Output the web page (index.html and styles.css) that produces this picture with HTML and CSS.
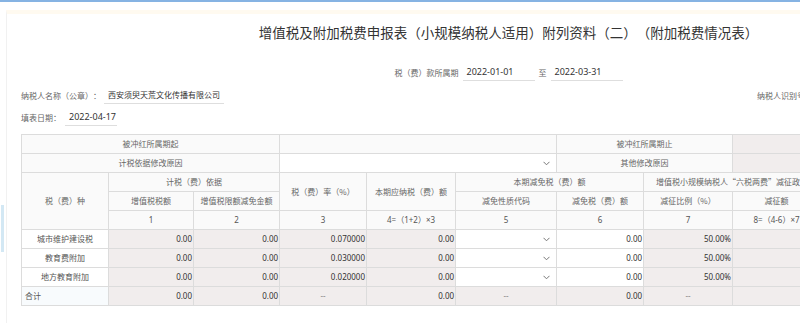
FILE: index.html
```html
<!DOCTYPE html>
<html lang="zh-CN">
<head>
<meta charset="utf-8">
<title>附加税费情况表</title>
<link rel="stylesheet" href="styles.css">
</head>
<body>
<div class="topbar"></div>
<div class="side-tab"></div>
<div class="page">
  <h1 class="title">增值税及附加税费申报表（小规模纳税人适用）附列资料（二）（附加税费情况表）</h1>
  <div class="period">
    <span class="label">税（费）款所属期</span>
    <span class="field w72">2022-01-01</span>
    <span class="label to">至</span>
    <span class="field w72">2022-03-31</span>
  </div>
  <div class="info-row">
    <div class="group">
      <span class="label">纳税人名称（公章）：</span>
      <span class="field w120 name">西安须臾天荒文化传播有限公司</span>
    </div>
    <div class="group right">
      <span class="label">纳税人识别号：</span>
      <span class="field w140"></span>
    </div>
  </div>
  <div class="date-row">
    <span class="label">填表日期：</span>
    <span class="field w52">2022-04-17</span>
  </div>
  <table class="grid">
    <colgroup>
      <col class="c87"><col class="c85"><col class="c86"><col class="c87"><col class="c89"><col class="c101"><col class="c87"><col class="c89"><col class="c88"><col class="c88"><col class="c88">
    </colgroup>
    <tr>
      <td colspan="3" class="hd">被冲红所属期起</td>
      <td colspan="3" class="hd"></td>
      <td colspan="2" class="hd">被冲红所属期止</td>
      <td colspan="3" class="ro"></td>
    </tr>
    <tr>
      <td colspan="3" class="hd">计税依据修改原因</td>
      <td colspan="3" class="sel"><span class="chev"><svg width="7" height="5" viewBox="0 0 7 5"><polyline points="0.5,0.8 3.5,3.8 6.5,0.8" fill="none" stroke="#777" stroke-width="1"/></svg></span></td>
      <td colspan="2" class="hd">其他修改原因</td>
      <td colspan="3" class="ro"></td>
    </tr>
    <tr>
      <td rowspan="3" class="hd">税（费）种</td>
      <td colspan="2" class="hd">计税（费）依据</td>
      <td rowspan="2" class="hd">税（费）率（%）</td>
      <td rowspan="2" class="hd">本期应纳税（费）额</td>
      <td colspan="2" class="hd">本期减免税（费）额</td>
      <td colspan="2" class="hd">增值税小规模纳税人“六税两费”减征政策</td>
      <td rowspan="2" class="hd">本期已缴税（费）额</td>
      <td rowspan="2" class="hd">本期应补（退）税（费）额</td>
    </tr>
    <tr>
      <td class="hd">增值税税额</td>
      <td class="hd">增值税限额减免金额</td>
      <td class="hd">减免性质代码</td>
      <td class="hd">减免税（费）额</td>
      <td class="hd">减征比例（%）</td>
      <td class="hd">减征额</td>
    </tr>
    <tr class="nums">
      <td class="hd">1</td>
      <td class="hd">2</td>
      <td class="hd">3</td>
      <td class="hd">4=（1+2）×3</td>
      <td class="hd">5</td>
      <td class="hd">6</td>
      <td class="hd">7</td>
      <td class="hd">8=（4-6）×7</td>
      <td class="hd">9</td>
      <td class="hd">10=4-6-8-9</td>
    </tr>
    <tr>
      <td class="nm">城市维护建设税</td>
      <td class="ro num">0.00</td>
      <td class="ro num">0.00</td>
      <td class="ro num">0.070000</td>
      <td class="ro num">0.00</td>
      <td class="sel"><span class="chev"><svg width="7" height="5" viewBox="0 0 7 5"><polyline points="0.5,0.8 3.5,3.8 6.5,0.8" fill="none" stroke="#777" stroke-width="1"/></svg></span></td>
      <td class="ed num">0.00</td>
      <td class="ro num">50.00%</td>
      <td class="ro num">0.00</td>
      <td class="ro num">0.00</td>
      <td class="ro num">0.00</td>
    </tr>
    <tr>
      <td class="nm">教育费附加</td>
      <td class="ro num">0.00</td>
      <td class="ro num">0.00</td>
      <td class="ro num">0.030000</td>
      <td class="ro num">0.00</td>
      <td class="sel"><span class="chev"><svg width="7" height="5" viewBox="0 0 7 5"><polyline points="0.5,0.8 3.5,3.8 6.5,0.8" fill="none" stroke="#777" stroke-width="1"/></svg></span></td>
      <td class="ed num">0.00</td>
      <td class="ro num">50.00%</td>
      <td class="ro num">0.00</td>
      <td class="ro num">0.00</td>
      <td class="ro num">0.00</td>
    </tr>
    <tr>
      <td class="nm">地方教育附加</td>
      <td class="ro num">0.00</td>
      <td class="ro num">0.00</td>
      <td class="ro num">0.020000</td>
      <td class="ro num">0.00</td>
      <td class="sel"><span class="chev"><svg width="7" height="5" viewBox="0 0 7 5"><polyline points="0.5,0.8 3.5,3.8 6.5,0.8" fill="none" stroke="#777" stroke-width="1"/></svg></span></td>
      <td class="ed num">0.00</td>
      <td class="ro num">50.00%</td>
      <td class="ro num">0.00</td>
      <td class="ro num">0.00</td>
      <td class="ro num">0.00</td>
    </tr>
    <tr>
      <td class="nm total">合计</td>
      <td class="ro num">0.00</td>
      <td class="ro num">0.00</td>
      <td class="ro dash">--</td>
      <td class="ro num">0.00</td>
      <td class="ro dash">--</td>
      <td class="ro num">0.00</td>
      <td class="ro dash">--</td>
      <td class="ro num">0.00</td>
      <td class="ro num">0.00</td>
      <td class="ro num">0.00</td>
    </tr>
  </table>
</div>
</body>
</html>
```
FILE: styles.css
```css
html, body {
  margin: 0;
  padding: 0;
  overflow: hidden;
  background: #fff;
}
body {
  font-family: "Noto Sans", "Noto Sans CJK SC", sans-serif;
  color: #333;
  position: relative;
  text-spacing-trim: space-all;
}
.topbar {
  height: 2px;
  background: #86b3e3;
}
.side-tab {
  position: absolute;
  left: 1px;
  top: 205px;
  width: 3px;
  height: 47px;
  background: #d3e8f4;
}
.page {
  width: 975px;
  margin-top: 8px;
  margin-left: 6px;
  border-top: 4px solid #fffaf0;
  border-left: 1px solid #f1f1f1;
  padding: 8px 0 0 14px;
  height: 400px;
}
.title {
  margin: 0;
  text-align: center;
  font-size: 13.5px;
  line-height: 20px;
  font-weight: normal;
  font-family: "Noto Sans CJK SC", sans-serif;
  color: #333;
}
.label {
  font-family: "Noto Sans CJK SC", sans-serif;
  font-size: 8px;
  color: #666;
}
.field {
  display: inline-block;
  box-sizing: border-box;
  height: 17px;
  line-height: 16px;
  padding: 0 4px;
  border-bottom: 1px solid #dedede;
  font-size: 9px;
  color: #333;
  white-space: nowrap;
}
.field.name {
  font-family: "Noto Sans CJK SC", sans-serif;
  font-size: 8px;
}
.w72 { width: 72px; }
.w120 { width: 120px; }
.w52 { width: 52px; }
.w140 { width: 140px; }
.period {
  margin-top: 20px;
  height: 20px;
  display: flex;
  justify-content: center;
  align-items: center;
  gap: 4px;
}
.info-row {
  margin-top: 3px;
  height: 20px;
  display: flex;
  justify-content: space-between;
  align-items: center;
}
.group {
  display: flex;
  align-items: center;
  gap: 3px;
}
.group.right {
  width: 239px;
}
.date-row {
  margin-top: 2px;
  height: 20px;
  display: flex;
  align-items: center;
  gap: 4px;
}
.grid {
  margin-top: 7px;
  border-collapse: collapse;
  table-layout: fixed;
  width: 975px;
}
.c87 { width: 87px; }
.c85 { width: 85px; }
.c86 { width: 86px; }
.c89 { width: 89px; }
.c101 { width: 101px; }
.c88 { width: 88px; }
.grid tr {
  height: 19px;
}
.grid td {
  border: 1px solid #dcdcdc;
  padding: 0 1px;
  font-size: 8px;
  line-height: 12px;
  white-space: nowrap;
  overflow: hidden;
  font-family: "Noto Sans", "Noto Sans CJK SC", sans-serif;
}
.grid td.hd {
  background: #fafafa;
  color: #666;
  text-align: center;
  font-family: "Noto Sans CJK SC", sans-serif;
}
.grid tr.nums td.hd {
  font-family: "Noto Sans", "Noto Sans CJK SC", sans-serif;
  color: #555;
}
.grid td.ro {
  background: #f1eded;
  color: #333;
}
.grid td.ed {
  background: #fff;
  color: #333;
}
.grid td.sel {
  background: #fff;
  text-align: right;
  padding-right: 6px;
}
.chev {
  display: inline-block;
  vertical-align: middle;
  line-height: 0;
}
.grid td.num {
  text-align: right;
}
.grid td.dash {
  text-align: center;
  color: #888;
}
.grid td.nm {
  background: #fff;
  text-align: center;
  color: #555;
  font-family: "Noto Sans CJK SC", sans-serif;
}
.grid td.nm.total {
  text-align: left;
  padding-left: 3px;
  background: #f8fbfd;
}
```
